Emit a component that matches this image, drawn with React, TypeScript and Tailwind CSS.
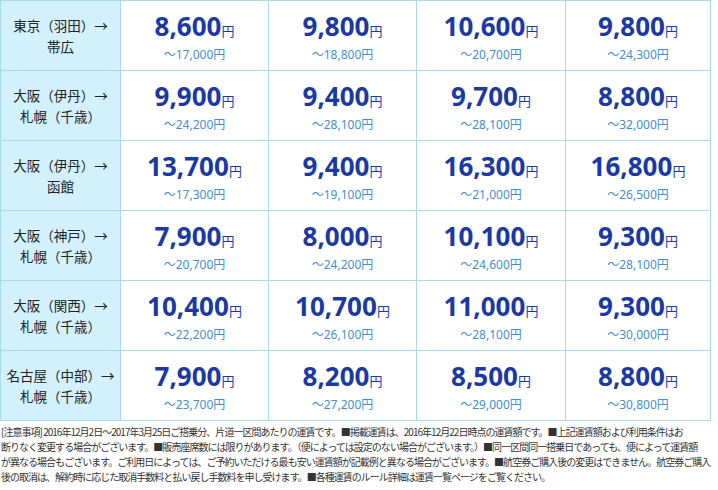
const rows: { from: string; to: string; fares: [string, string][] }[] = [
  {
    from: "東京（羽田）→",
    to: "帯広",
    fares: [
      ["8,600", "17,000"],
      ["9,800", "18,800"],
      ["10,600", "20,700"],
      ["9,800", "24,300"],
    ],
  },
  {
    from: "大阪（伊丹）→",
    to: "札幌（千歳）",
    fares: [
      ["9,900", "24,200"],
      ["9,400", "28,100"],
      ["9,700", "28,100"],
      ["8,800", "32,000"],
    ],
  },
  {
    from: "大阪（伊丹）→",
    to: "函館",
    fares: [
      ["13,700", "17,300"],
      ["9,400", "19,100"],
      ["16,300", "21,000"],
      ["16,800", "26,500"],
    ],
  },
  {
    from: "大阪（神戸）→",
    to: "札幌（千歳）",
    fares: [
      ["7,900", "20,700"],
      ["8,000", "24,200"],
      ["10,100", "24,600"],
      ["9,300", "28,100"],
    ],
  },
  {
    from: "大阪（関西）→",
    to: "札幌（千歳）",
    fares: [
      ["10,400", "22,200"],
      ["10,700", "26,100"],
      ["11,000", "28,100"],
      ["9,300", "30,000"],
    ],
  },
  {
    from: "名古屋（中部）→",
    to: "札幌（千歳）",
    fares: [
      ["7,900", "23,700"],
      ["8,200", "27,200"],
      ["8,500", "29,000"],
      ["8,800", "30,800"],
    ],
  },
];

const notes = [
  "[注意事項] 2016年12月2日～2017年3月25日ご搭乗分、片道一区間あたりの運賃です。■掲載運賃は、2016年12月22日時点の運賃額です。■上記運賃額および利用条件はお",
  "断りなく変更する場合がございます。■販売座席数には限りがあります。（便によっては設定のない場合がございます。）■同一区間同一搭乗日であっても、便によって運賃額",
  "が異なる場合もございます。ご利用日によっては、ご予約いただける最も安い運賃額が記載例と異なる場合がございます。■航空券ご購入後の変更はできません。航空券ご購入",
  "後の取消は、解約時に応じた取消手数料と払い戻し手数料を申し受けます。■各種運賃のルール詳細は運賃一覧ページをご覧ください。",
];

export default function App() {
  return (
    <div className="w-[718px] h-[490px] overflow-hidden bg-white font-['Noto_Sans','Noto_Sans_CJK_JP',sans-serif]">
      <table className="w-[711px] table-fixed border-collapse">
        <colgroup>
          <col className="w-[120px]" />
          <col className="w-[148px]" />
          <col className="w-[148px]" />
          <col className="w-[149px]" />
          <col />
        </colgroup>
        <tbody>
          {rows.map((row, i) => (
            <tr key={i} className="h-[70px]">
              <td className="border border-[#a8d9ef] bg-[#d3f0fd] p-0 text-center align-middle font-['Noto_Sans_CJK_JP',sans-serif] text-[13.5px] leading-[21px] text-[#222]">
                <div>{row.from}</div>
                <div>{row.to}</div>
              </td>
              {row.fares.map(([price, max], j) => (
                <td key={j} className="border border-[#a8d9ef] p-0 pt-[4px] text-center align-middle">
                  <div className="leading-[26px] text-[#1a39a3]">
                    <span className="text-[26px] font-bold">{price}</span>
                    <span className="font-['Noto_Sans_CJK_JP',sans-serif] text-[13px]">円</span>
                  </div>
                  <div className="mt-[3px] text-[12px] leading-[16px] text-[#3f8fd2]">～{max}円</div>
                </td>
              ))}
            </tr>
          ))}
        </tbody>
      </table>
      <div className="w-[712px] pt-[3px] pl-[1px] font-['Noto_Sans_CJK_JP',sans-serif] text-[10px] leading-[15px] tracking-[-0.98px] text-[#333]">
        {notes.map((n, i) => (
          <div key={i} className="whitespace-nowrap">
            {n}
          </div>
        ))}
      </div>
    </div>
  );
}
